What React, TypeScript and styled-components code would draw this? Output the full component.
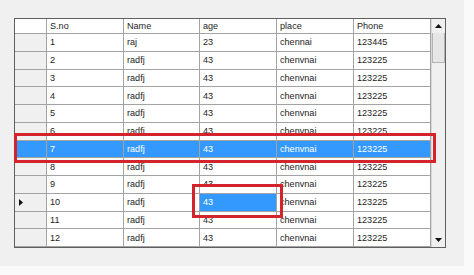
import React from "react";
import styled, { createGlobalStyle } from "styled-components";

const GlobalStyle = createGlobalStyle`
  html, body { margin: 0; padding: 0; background: #fafafa; }
  * { box-sizing: border-box; }
`;

const COLS = "32px 77px 76px 77px 77px 77px";

const Panel = styled.div`
  position: relative;
  width: 464px;
  height: 266px;
  background: #f0f0f0;
  padding: 18px 0 0 14px;
  font-family: "Liberation Sans", Arial, sans-serif;
`;

const GridFrame = styled.div`
  display: flex;
  width: 432px;
  height: 230px;
  border: 1px solid #5f5f5f;
  background: #fff;
`;

const Table = styled.div`
  width: 416px;
  display: flex;
  flex-direction: column;
`;

const Row = styled.div<{ $header?: boolean }>`
  display: grid;
  grid-template-columns: ${COLS};
  height: ${(p) => (p.$header ? "15px" : "17.75px")};
`;

const Cell = styled.div<{ $sel?: boolean; $rowHead?: boolean }>`
  display: flex;
  align-items: center;
  padding-left: 3px;
  border-right: 1px solid #a3a3a3;
  border-bottom: 1px solid #a3a3a3;
  font-size: 9.1px;
  white-space: nowrap;
  overflow: hidden;
  color: ${(p) => (p.$sel ? "#ffffff" : "#1e1e1e")};
  background: ${(p) => (p.$sel ? "#3399ff" : p.$rowHead ? "#f0f0f0" : "#ffffff")};
`;

const Scroll = styled.div`
  width: 14px;
  display: flex;
  flex-direction: column;
  background: #f0f0f0;
  border-left: 1px solid #d8d8d8;
`;

const ArrowBtn = styled.div`
  height: 14px;
  display: flex;
  align-items: center;
  justify-content: center;
  background: #f0f0f0;
`;

const Thumb = styled.div`
  height: 30px;
  background: #e6e6e6;
  border: 1px solid #b4b4b4;
  border-top: none;
`;

const Track = styled.div`
  flex: 1;
  background: #f0f0f0;
`;

const RedBox = styled.div<{ $x: number; $y: number; $w: number; $h: number }>`
  position: absolute;
  left: ${(p) => p.$x}px;
  top: ${(p) => p.$y}px;
  width: ${(p) => p.$w}px;
  height: ${(p) => p.$h}px;
  border: 3px solid #d3232b;
  pointer-events: none;
`;

const Up = () => (
  <svg width="7" height="4" viewBox="0 0 7 4">
    <path d="M3.5 0 L7 4 L0 4 Z" fill="#111" />
  </svg>
);
const Down = () => (
  <svg width="7" height="4" viewBox="0 0 7 4">
    <path d="M0 0 L7 0 L3.5 4 Z" fill="#111" />
  </svg>
);
const Pointer = () => (
  <svg width="4" height="7" viewBox="0 0 4 7">
    <path d="M0 0 L4 3.5 L0 7 Z" fill="#111" />
  </svg>
);

const rows = [
  ["1", "raj", "23", "chennai", "123445"],
  ["2", "radfj", "43", "chenvnai", "123225"],
  ["3", "radfj", "43", "chenvnai", "123225"],
  ["4", "radfj", "43", "chenvnai", "123225"],
  ["5", "radfj", "43", "chenvnai", "123225"],
  ["6", "radfj", "43", "chenvnai", "123225"],
  ["7", "radfj", "43", "chenvnai", "123225"],
  ["8", "radfj", "43", "chenvnai", "123225"],
  ["9", "radfj", "43", "chenvnai", "123225"],
  ["10", "radfj", "43", "chenvnai", "123225"],
  ["11", "radfj", "43", "chenvnai", "123225"],
  ["12", "radfj", "43", "chenvnai", "123225"],
];

export default function App() {
  return (
    <>
      <GlobalStyle />
      <Panel>
        <GridFrame>
          <Table>
            <Row $header>
              <Cell />
              <Cell>S.no</Cell>
              <Cell>Name</Cell>
              <Cell>age</Cell>
              <Cell>place</Cell>
              <Cell>Phone</Cell>
            </Row>
            {rows.map((r, i) => {
              const rowSel = i === 6;
              const current = i === 9;
              return (
                <Row key={i}>
                  <Cell $rowHead $sel={rowSel} style={{ paddingLeft: 4 }}>
                    {current ? <Pointer /> : null}
                  </Cell>
                  {r.map((v, j) => (
                    <Cell key={j} $sel={rowSel || (current && j === 2)}>
                      {v}
                    </Cell>
                  ))}
                </Row>
              );
            })}
          </Table>
          <Scroll>
            <ArrowBtn>
              <Up />
            </ArrowBtn>
            <Thumb />
            <Track />
            <ArrowBtn>
              <Down />
            </ArrowBtn>
          </Scroll>
        </GridFrame>
        <RedBox $x={14} $y={133} $w={422} $h={30} />
        <RedBox $x={192} $y={184} $w={91} $h={34} />
      </Panel>
    </>
  );
}
